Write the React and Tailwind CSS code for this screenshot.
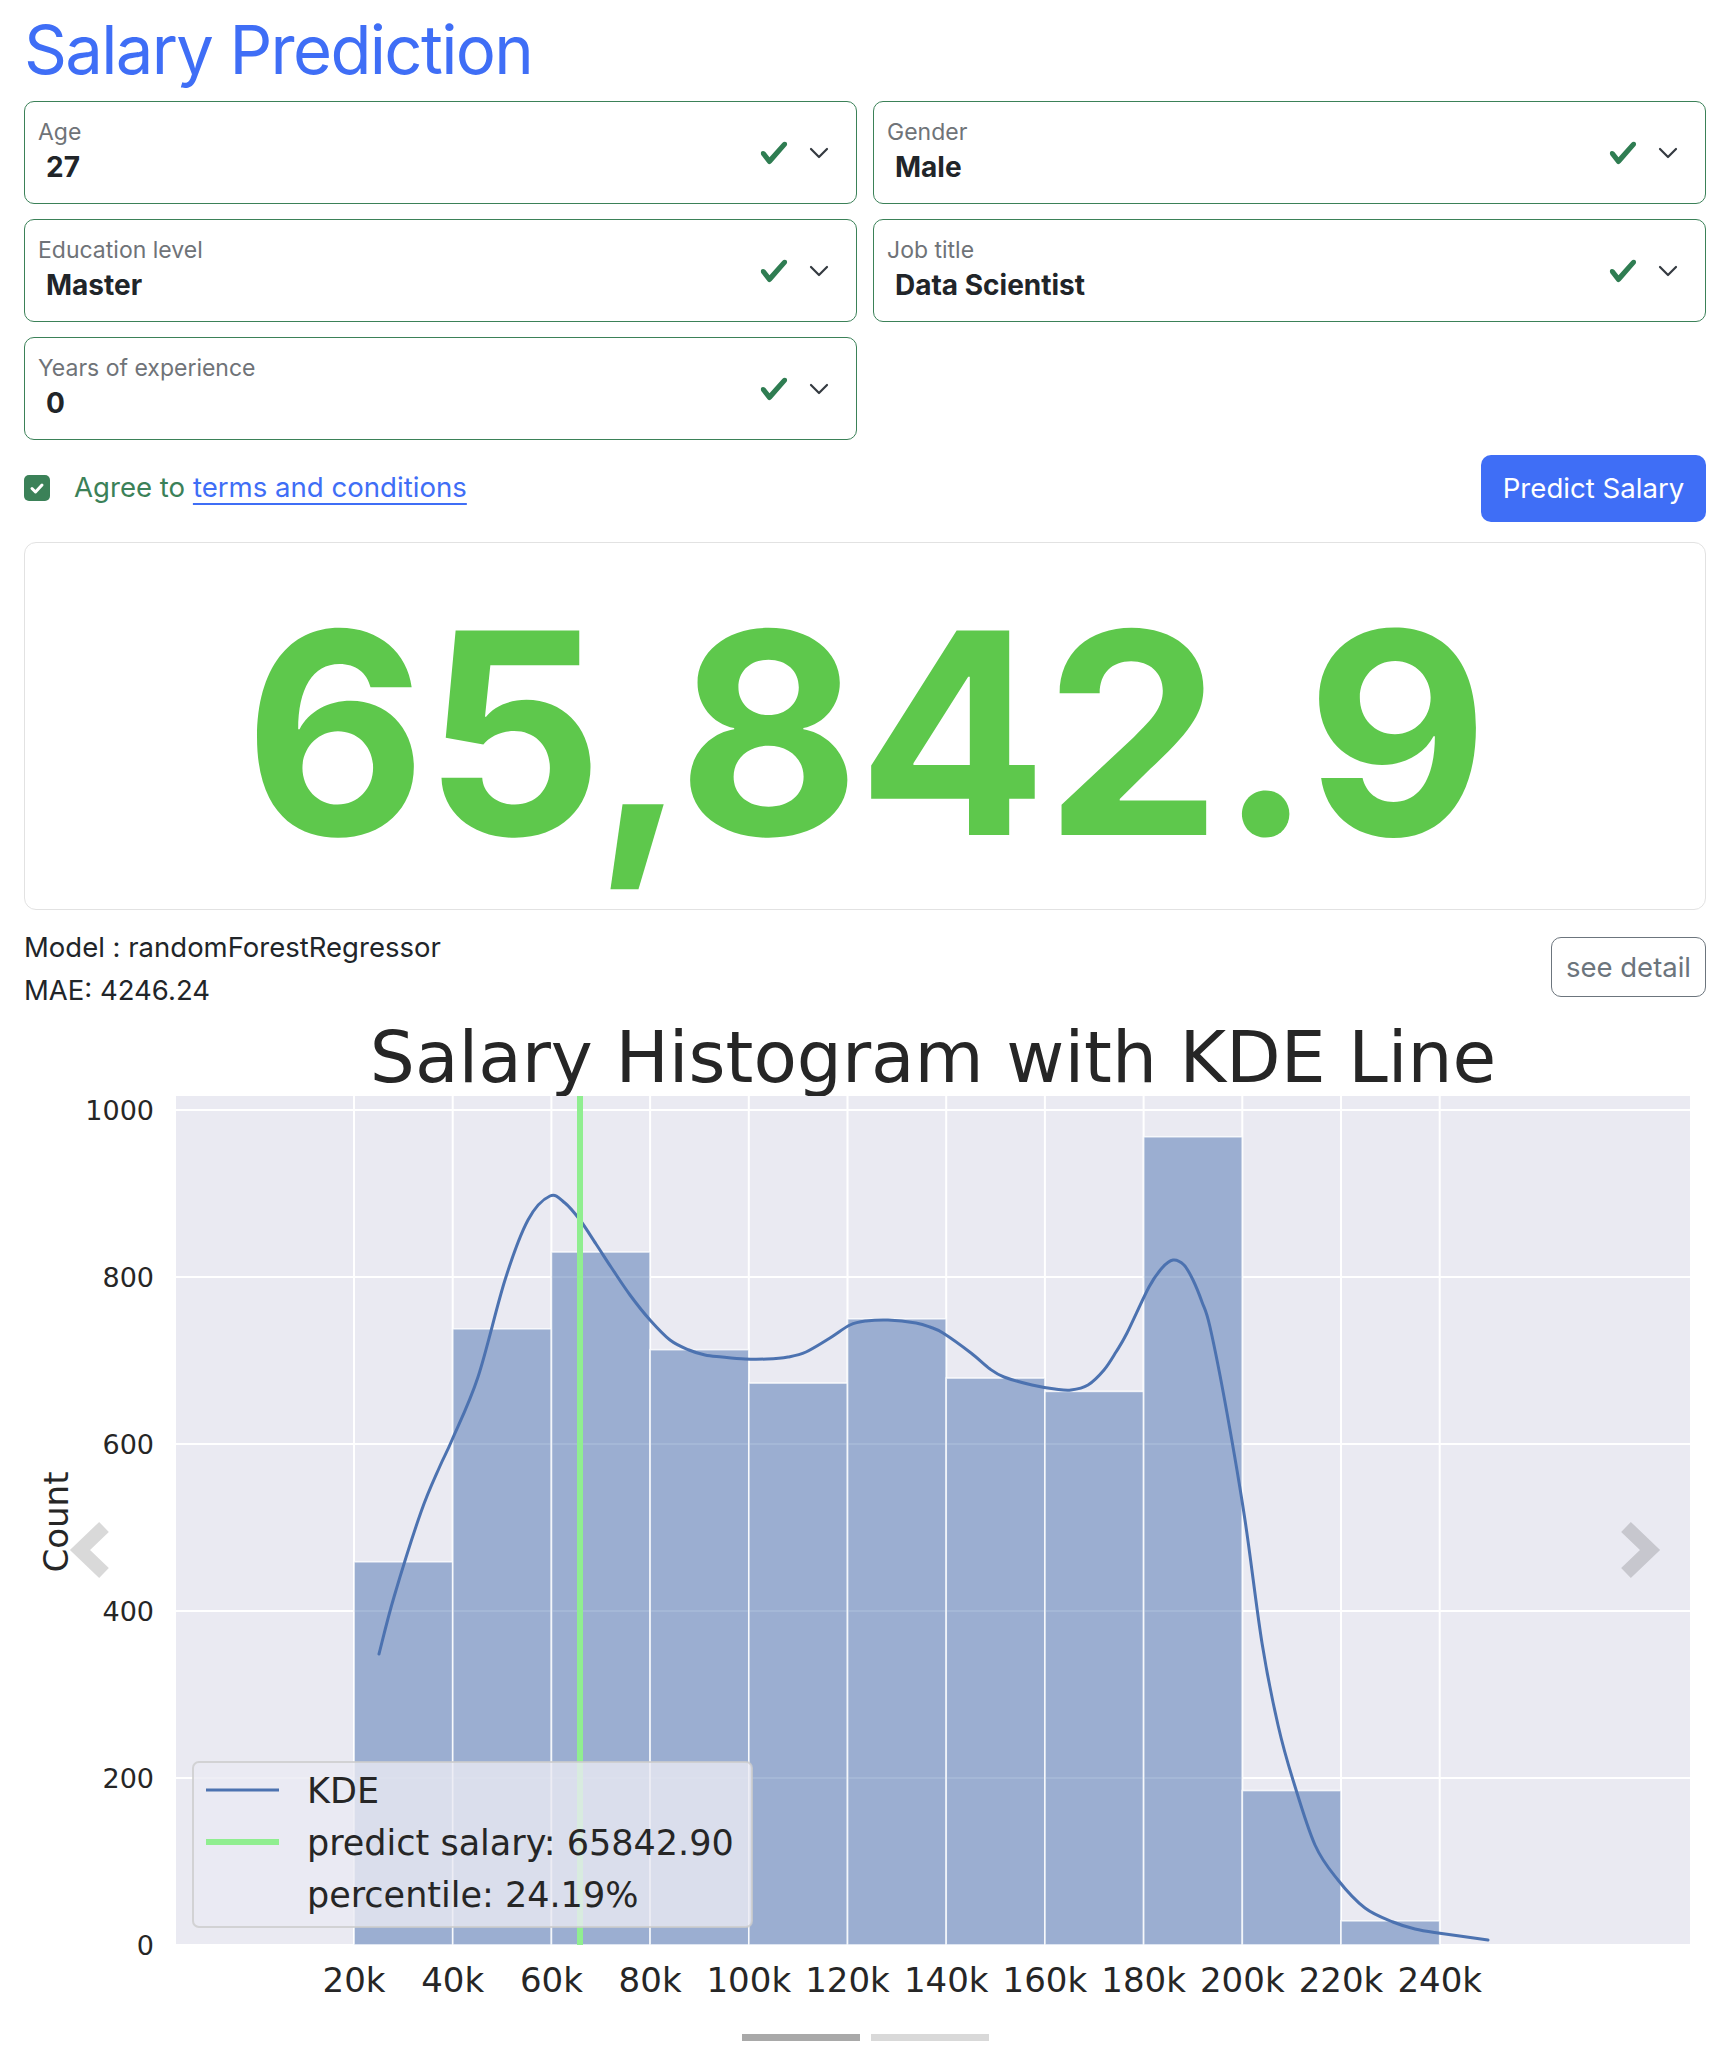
import React from "react";

const fields = [
  { label: "Age", value: "27" },
  { label: "Gender", value: "Male" },
  { label: "Education level", value: "Master" },
  { label: "Job title", value: "Data Scientist" },
  { label: "Years of experience", value: "0" },
];

const bars = [459, 738, 830, 713, 673, 750, 679, 663, 968, 185, 29];

const kde = [
  [379, 1654], [394, 1597], [421, 1512], [440, 1466], [452, 1440], [478, 1377],
  [505, 1280], [528, 1220], [550, 1196], [565, 1203], [580, 1220], [596, 1244],
  [611, 1267], [630, 1295], [650, 1320], [670, 1340], [689, 1350], [705, 1355],
  [722, 1357], [745, 1359], [767, 1359], [788, 1357], [806, 1352], [830, 1338],
  [850, 1325], [866, 1321], [888, 1320], [916, 1323], [930, 1327], [943, 1333],
  [971, 1353], [990, 1369], [1004, 1377], [1032, 1385], [1055, 1389], [1071, 1390],
  [1088, 1385], [1104, 1370], [1116, 1352], [1127, 1333], [1149, 1287], [1162, 1268],
  [1173, 1260], [1184, 1265], [1193, 1280], [1202, 1302], [1210, 1327], [1227, 1413],
  [1245, 1520], [1262, 1643], [1278, 1725], [1293, 1780], [1315, 1845], [1338, 1880],
  [1365, 1908], [1393, 1922], [1415, 1929], [1438, 1933], [1488, 1940],
];

const xv = (v) => 354 + ((v - 20000) / 20000) * 98.7;
const yc = (c) => 1945 - 0.835 * c;

// catmull-rom -> cubic bezier
function smooth(pts) {
  let d = `M${pts[0][0]},${pts[0][1]}`;
  for (let i = 0; i < pts.length - 1; i++) {
    const p0 = pts[i - 1] || pts[i];
    const p1 = pts[i];
    const p2 = pts[i + 1];
    const p3 = pts[i + 2] || p2;
    const c1x = p1[0] + (p2[0] - p0[0]) / 6;
    const c1y = p1[1] + (p2[1] - p0[1]) / 6;
    const c2x = p2[0] - (p3[0] - p1[0]) / 6;
    const c2y = p2[1] - (p3[1] - p1[1]) / 6;
    d += ` C${c1x.toFixed(1)},${c1y.toFixed(1)} ${c2x.toFixed(1)},${c2y.toFixed(1)} ${p2[0]},${p2[1]}`;
  }
  return d;
}

const ValidCheck = () => (
  <svg width="30" height="30" viewBox="0 0 8 8">
    <path
      fill="#2f7d52"
      d="M2.3 6.73.6 4.53c-.4-1.04.46-1.4 1.1-.8l1.1 1.4 3.4-3.8c.6-.63 1.6-.27 1.2.7l-4 4.6c-.43.5-.8.4-1.1.1z"
    />
  </svg>
);

const Chevron = () => (
  <svg width="20" height="14" viewBox="0 0 20 14">
    <polyline points="2,3 10,11 18,3" fill="none" stroke="#343a40" strokeWidth="2.2" strokeLinecap="round" strokeLinejoin="round" />
  </svg>
);

const Field = ({ label, value }) => (
  <div className="h-[103px] flex justify-between rounded-[10px] border-[1.5px] border-[#3b8158] bg-white">
    <div className="flex flex-col pl-[13px] pt-[16px]">
      <span className="text-[23px] leading-[28px] text-[#6f7378]">{label}</span>
      <span className="mt-[4px] pl-[8px] text-[28px] leading-[34px] font-bold text-[#212529]">{value}</span>
    </div>
    <div className="flex items-center gap-[20px] pr-[27px]">
      <ValidCheck />
      <Chevron />
    </div>
  </div>
);

const Chart = () => {
  const gridX = [];
  for (let v = 20000; v <= 240000; v += 20000) gridX.push(v);
  const gridY = [0, 200, 400, 600, 800, 1000];
  const tick = "#262626";
  const font = "'DejaVu Sans', sans-serif";
  return (
    <svg width="1682" height="1050" viewBox="24 1012 1682 1050" className="block">
      <text x="933" y="1082" fontFamily={font} fontSize="71" fill={tick} textAnchor="middle">
        Salary Histogram with KDE Line
      </text>
      <rect x="176" y="1096" width="1514" height="849" fill="#eaeaf2" />
      {gridY.map((c) => (
        <line key={c} x1="176" x2="1690" y1={yc(c)} y2={yc(c)} stroke="#fff" strokeWidth="2" />
      ))}
      {gridX.map((v) => (
        <line key={v} x1={xv(v)} x2={xv(v)} y1="1096" y2="1945" stroke="#fff" strokeWidth="2" />
      ))}
      {bars.map((c, i) => {
        const x0 = xv(20000 + i * 20000);
        const x1 = xv(40000 + i * 20000);
        return (
          <rect
            key={i}
            x={x0}
            y={yc(c)}
            width={x1 - x0}
            height={1945 - yc(c)}
            fill="#4c72b0"
            fillOpacity="0.5"
            stroke="#ffffff"
            strokeOpacity="0.8"
            strokeWidth="1.6"
          />
        );
      })}
      <path d={smooth(kde)} fill="none" stroke="#4c72b0" strokeWidth="3" strokeLinecap="round" />
      <line x1="580" x2="580" y1="1096" y2="1945" stroke="#90ee90" strokeWidth="6" />
      <rect x="193" y="1762" width="559" height="165" rx="6" fill="#eaeaf2" fillOpacity="0.8" stroke="#cccccc" strokeOpacity="0.8" strokeWidth="2" />
      <line x1="206" x2="279" y1="1790" y2="1790" stroke="#4c72b0" strokeWidth="3" />
      <line x1="206" x2="279" y1="1842" y2="1842" stroke="#90ee90" strokeWidth="6" />
      <g fontFamily={font} fontSize="35" fill={tick}>
        <text x="307" y="1803">KDE</text>
        <text x="307" y="1855">predict salary: 65842.90</text>
        <text x="307" y="1907">percentile: 24.19%</text>
      </g>
      <g fontFamily={font} fontSize="27" fill={tick} textAnchor="end">
        {gridY.map((c) => (
          <text key={c} x="154" y={yc(c) + 10}>
            {c}
          </text>
        ))}
      </g>
      <g fontFamily={font} fontSize="34" fill={tick} textAnchor="middle">
        {gridX.map((v) => (
          <text key={v} x={xv(v)} y="1992">
            {v / 1000}k
          </text>
        ))}
      </g>
      <text transform="translate(68,1522) rotate(-90)" fontFamily={font} fontSize="34" fill={tick} textAnchor="middle">
        Count
      </text>
    </svg>
  );
};

const Arrow = ({ dir }) => (
  <svg width="44" height="60" viewBox="0 0 44 60">
    <polyline
      points={dir === "left" ? "36,7 12,30 36,53" : "8,7 32,30 8,53"}
      fill="none"
      stroke="rgba(0,0,0,0.15)"
      strokeWidth="14"
      strokeLinejoin="miter"
    />
  </svg>
);

export default function App() {
  return (
    <div className="w-full bg-white px-[24px] font-['Inter',sans-serif] text-[#212529]">
      <h1 className="pt-[10px] mb-[11px] text-[67px] leading-[1.2] tracking-[-0.025em] font-normal text-[#3f6ef6]">
        Salary Prediction
      </h1>

      <div className="grid grid-cols-2 gap-x-[16px] gap-y-[15px]">
        {fields.map((f) => (
          <Field key={f.label} {...f} />
        ))}
      </div>

      <div className="mt-[15px] h-[67px] flex items-center justify-between">
        <label className="-mt-[2px] flex items-center gap-[24px] text-[27.6px]">
          <span className="w-[26px] h-[26px] rounded-[5px] bg-[#3b8158] flex items-center justify-center">
            <svg width="20" height="20" viewBox="0 0 20 20">
              <path d="M5 10.5l3.5 3.5 6.5-7" fill="none" stroke="#fff" strokeWidth="3" strokeLinecap="round" strokeLinejoin="round" />
            </svg>
          </span>
          <span className="text-[#3b8158]">
            Agree to <a className="text-[#3f6ef6] underline underline-offset-[6px]">terms and conditions</a>
          </span>
        </label>
        <button className="w-[225px] h-[67px] rounded-[10px] bg-[#3f6ef6] text-white text-[27.6px]">Predict Salary</button>
      </div>

      <div className="mt-[20px] h-[368px] pt-[14px] rounded-[12px] border border-[#e2e2e2] flex items-center justify-center">
        <span className="text-[281px] leading-none font-bold tracking-[-0.01em] text-[#5ec84c]">65,842.9</span>
      </div>

      <div className="mt-[16px] flex items-start justify-between">
        <div className="text-[27.5px] leading-[43px]">
          <div>Model : randomForestRegressor</div>
          <div>MAE: 4246.24</div>
        </div>
        <button className="mt-[11px] w-[155px] h-[60px] rounded-[10px] border-[1.5px] border-[#6c757d] text-[27.5px] text-[#6c757d]">
          see detail
        </button>
      </div>

      <div className="relative">
        <Chart />
        <div className="absolute left-[44px] top-[508px]">
          <Arrow dir="left" />
        </div>
        <div className="absolute right-[44px] top-[508px]">
          <Arrow dir="right" />
        </div>
        <div className="absolute bottom-[21px] left-0 right-0 flex justify-center gap-[11px]">
          <span className="w-[118px] h-[7px] bg-[#a9a9a9]" />
          <span className="w-[118px] h-[7px] bg-[#d9d9d9]" />
        </div>
      </div>
    </div>
  );
}
